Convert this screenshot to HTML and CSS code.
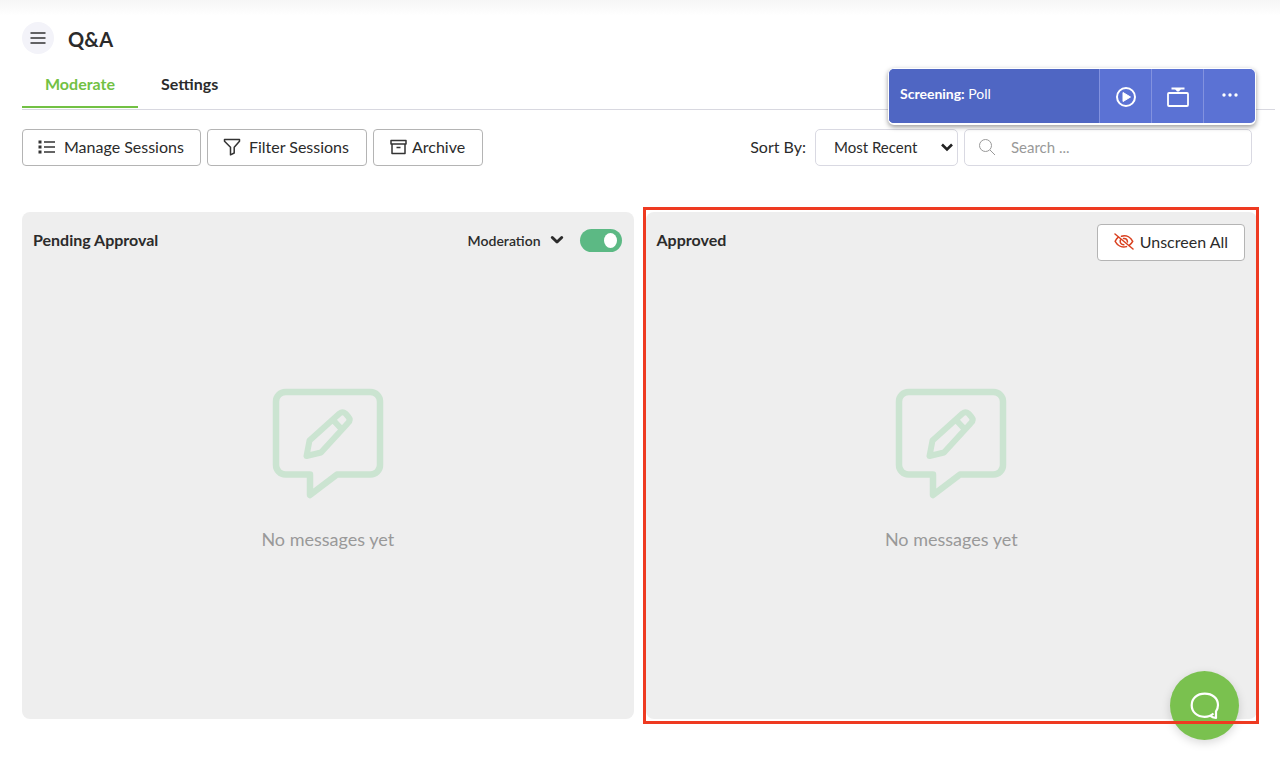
FILE: index.html
```
<!DOCTYPE html>
<html lang="en">
<head>
    <meta charset="UTF-8">
    <meta name="viewport" content="width=device-width, initial-scale=1.0">
    <title>Q&amp;A</title>
    <link rel="stylesheet" href="styles.css">
</head>
<body>
    <header class="header">
        <button class="menu-btn" aria-label="Menu">
            <svg width="16" height="12" viewBox="0 0 16 12" stroke="#333" stroke-width="1.6"><path d="M0.500 1h15M0.500 6h15M0.500 11h15"/></svg>
        </button>
        <h1>Q&amp;A</h1>
    </header>

    <nav class="tabs">
        <a href="#moderate" class="tab active">Moderate</a>
        <a href="#settings" class="tab">Settings</a>
    </nav>

    <div class="screening">
        <div class="screening-label"><strong>Screening:</strong> Poll</div>
        <button aria-label="Play">
            <svg width="22" height="22" viewBox="0 0 22 22" fill="none" stroke="#fff" stroke-width="2"><circle cx="11" cy="11" r="9"/><path d="M8 6.500v9l7.500-4.500z" fill="#fff" stroke-width="1" stroke-linejoin="round"/></svg>
        </button>
        <button aria-label="Screen">
            <svg width="22" height="20" viewBox="0 0 22 20" fill="none" stroke="#fff" stroke-width="1.800"><rect x="1" y="6" width="20" height="13" rx="1"/><path d="M4.500 1.500h13" /><path d="M8 2h6l-2 2.500h-2z" fill="#fff" stroke="none"/></svg>
        </button>
        <button aria-label="More">
            <svg class="dots" width="18" height="4" viewBox="0 0 18 4" fill="#fff"><circle cx="3" cy="2" r="1.700"/><circle cx="9" cy="2" r="1.700"/><circle cx="15" cy="2" r="1.700"/></svg>
        </button>
    </div>

    <div class="toolbar">
        <button class="btn">
            <svg width="18" height="14" viewBox="0 0 18 14" stroke="#333" stroke-width="1.500" fill="#333"><path d="M6 2h11M6 7h11M6 12h11"/><path d="M0.500 0.500h3v3h-3zM0.500 5.500h3v3h-3zM0.500 10.500h3v3h-3z" stroke="none"/></svg>
            <span>Manage Sessions</span>
        </button>
        <button class="btn filter">
            <svg width="18" height="18" viewBox="0 0 18 18" fill="none" stroke="#333" stroke-width="1.500" stroke-linejoin="round"><path d="M1.500 1.500h15v1.700l-5.300 6v5.800l-3.700 1.800v-7.600l-6-6z"/></svg>
            <span>Filter Sessions</span>
        </button>
        <button class="btn archive">
            <svg width="17" height="16" viewBox="0 0 17 16" fill="none" stroke="#333" stroke-width="1.500" stroke-linejoin="round"><rect x="1" y="1.500" width="15" height="3.500"/><path d="M2 5v9.500h13V5M6.500 8.500h4"/></svg>
            <span>Archive</span>
        </button>

        <label class="sort-label" for="sort">Sort By:</label>
        <div class="select">
            <select id="sort">
                <option>Most Recent</option>
            </select>
            <svg width="12" height="9" viewBox="0 0 12 9" fill="none" stroke="#222" stroke-width="2.600"><path d="M1 1.500l5 5 5-5"/></svg>
        </div>
        <div class="search">
            <svg width="18" height="18" viewBox="0 0 18 18" fill="none" stroke="#999" stroke-width="1"><circle cx="7.500" cy="7.500" r="6"/><path d="M12 12l5 5"/></svg>
            <input type="text" placeholder="Search ..." aria-label="Search">
        </div>
    </div>

    <main class="panels">
        <section class="panel">
            <div class="panel-head">
                <h2>Pending Approval</h2>
                <button class="moderation">Moderation
                    <svg width="14" height="10" viewBox="0 0 14 10" fill="none" stroke="#2b2b2b" stroke-width="3" stroke-linejoin="round" stroke-linecap="round"><path d="M2.300 2.500l4.700 4.500 4.700-4.500"/></svg>
                </button>
                <input type="checkbox" class="toggle" aria-label="Moderation" checked>
            </div>
            <div class="empty">
                <svg width="112" height="112" viewBox="0 0 112 112" fill="none" stroke="#cbe4d1" stroke-width="6.500" stroke-linejoin="round"><path d="M38 86.500H13.500a9.500 9.500 0 0 1-9.500-9.500V13.500A9.500 9.500 0 0 1 13.500 4h85a9.500 9.500 0 0 1 9.500 9.500V77a9.500 9.500 0 0 1-9.500 9.500H65L38 107z"/><path d="M34.500 68l3-15.500L67.500 25.500q3-2.500 6 0l3 3.500q2.500 3-0.500 6L49 64.500z M61 32l8.500 9" stroke-width="6"/></svg>
                <p>No messages yet</p>
            </div>
        </section>

        <section class="panel highlighted">
            <div class="panel-head">
                <h2>Approved</h2>
                <button class="btn unscreen">
                    <svg width="20" height="17" viewBox="0 0 20 17" fill="none" stroke="#d9401f" stroke-width="1.500" stroke-linecap="round"><path d="M1 1l18 15M7.500 3.200C13 1.700 17 5 18.700 8.300q-1.200 2.200-3 3.500M4.300 4.200Q2.300 5.800 1.200 8.300C3.500 12.700 8 15 12.500 13.600M9.500 5.500q3.600-.4 4 3.500M6.300 7.200q-.6 4 3.500 4.600"/></svg>
                    <span>Unscreen All</span>
                </button>
            </div>
            <div class="empty">
                <svg width="112" height="112" viewBox="0 0 112 112" fill="none" stroke="#cbe4d1" stroke-width="6.500" stroke-linejoin="round"><path d="M38 86.500H13.500a9.500 9.500 0 0 1-9.500-9.500V13.500A9.500 9.500 0 0 1 13.500 4h85a9.500 9.500 0 0 1 9.500 9.500V77a9.500 9.500 0 0 1-9.500 9.500H65L38 107z"/><path d="M34.500 68l3-15.500L67.500 25.500q3-2.500 6 0l3 3.500q2.500 3-0.500 6L49 64.500z M61 32l8.500 9" stroke-width="6"/></svg>
                <p>No messages yet</p>
            </div>
        </section>
    </main>

    <button class="chat" aria-label="Chat">
        <svg width="30" height="28" viewBox="0 0 30 28" fill="none" stroke="#fff" stroke-width="2.200" stroke-linejoin="round"><path d="M23.500 21.500C21 23.900 18 24.800 14.500 24.800 7 24.800 1.700 20 1.700 13.200S7 1.700 14.800 1.700 28 6.500 28 13q0 3.500-2 6.300V26q-3.500-.3-6-2.300"/></svg>
    </button>
</body>
</html>
```
FILE: styles.css
```
* {
    box-sizing: border-box;
}

body {
    margin: 0;
    min-height: 100vh;
    display: flex;
    flex-direction: column;
    padding: 22px 0 61px 22px;
    font-family: Lato, sans-serif;
    font-size: 16px;
    color: #2b2b2b;
    background: linear-gradient(#f6f6f6, #fff 16px);
}

button, input, select {
    font-family: inherit;
    font-size: 16px;
    color: inherit;
}

button {
    cursor: pointer;
}

svg {
    flex-shrink: 0;
}

.header {
    display: flex;
    align-items: center;
    gap: 14px;
    height: 32px;
}

.menu-btn {
    display: flex;
    align-items: center;
    justify-content: center;
    width: 32px;
    height: 32px;
    padding: 0;
    border: none;
    border-radius: 50%;
    background: #f3f3f9;
}

h1 {
    margin: 0;
    padding-top: 2px;
    font-size: 20px;
    line-height: 28px;
    font-weight: bold;
}

.tabs {
    display: flex;
    height: 56px;
    margin-right: 5px;
    padding-top: 14px;
    padding-bottom: 1px;
    border-bottom: 1px solid #d8d8e0;
}

.tab {
    padding: 5px 23px 0;
    font-size: 16px;
    line-height: 22px;
    font-weight: bold;
    color: inherit;
    text-decoration: none;
}

.tab.active {
    color: #72c144;
    border-bottom: 2px solid #72c144;
}

/* floating screening bar */
.screening {
    position: absolute;
    top: 68px;
    right: 24px;
    z-index: 2;
    display: flex;
    width: 368px;
    height: 57px;
    border: 1px solid #fff;
    border-bottom-width: 2px;
    border-radius: 6px;
    overflow: hidden;
    background: #5b72d4;
    box-shadow: 0 2px 5px rgba(0, 0, 0, 0.4);
    color: #fff;
}

.screening-label {
    flex: 1;
    padding: 15px 11px;
    font-size: 14px;
    line-height: 20px;
    background: #4f66c3;
}

.screening button {
    display: flex;
    align-items: center;
    justify-content: center;
    width: 52px;
    padding: 2px 0 0;
    border: none;
    border-left: 1px solid #8292df;
    background: none;
}

.screening .dots {
    margin-bottom: 4px;
}

.toolbar {
    display: flex;
    align-items: center;
    gap: 6px;
    margin: 19px 28px 0 0;
}

.btn {
    display: flex;
    align-items: center;
    gap: 8px;
    height: 37px;
    padding: 0 16px 2px 15px;
    border: 1px solid #b4b4b4;
    border-radius: 4px;
    background: #fff;
    white-space: nowrap;
}

.btn.filter {
    padding-right: 17px;
}

.btn.archive {
    gap: 5px;
    padding-left: 16px;
    padding-right: 17px;
}

.sort-label {
    margin-left: auto;
    padding: 0 3px 2px 0;
}

.select {
    position: relative;
    width: 143px;
}

.select select {
    appearance: none;
    width: 100%;
    height: 37px;
    padding: 0 18px 1px;
    border: 1px solid #d9d9e2;
    border-radius: 5px;
    background: #fff;
    font-size: 15px;
}

.select svg {
    position: absolute;
    right: 5px;
    top: 14px;
    pointer-events: none;
}

.search {
    display: flex;
    align-items: center;
    gap: 15px;
    width: 288px;
    height: 37px;
    padding: 0 13px 2px;
    border: 1px solid #d9d9e2;
    border-radius: 5px;
    background: #fff;
}

.search input {
    flex: 1;
    min-width: 0;
    padding: 0;
    border: none;
    outline: none;
    background: none;
    font-size: 15px;
}

.search input::placeholder {
    color: #999;
}

.panels {
    flex: 1;
    display: grid;
    grid-template-columns: 1fr 1fr;
    gap: 12px;
    margin: 46px 23px 0 0;
}

.panel {
    position: relative;
    display: flex;
    flex-direction: column;
    border-radius: 8px;
    background: #eee;
}

/* frame stays above the chat button */
.highlighted::after {
    content: "";
    position: absolute;
    inset: -5px -2px -5px -3px;
    z-index: 3;
    border: 3px solid #ee3a21;
    pointer-events: none;
}

.panel-head {
    display: flex;
    align-items: center;
    height: 57px;
    padding: 0 12px 0 11px;
}

.panel-head h2 {
    margin: 0 auto 0 0;
    padding-bottom: 2px;
    font-size: 16px;
    font-weight: bold;
}

.moderation {
    display: flex;
    align-items: center;
    gap: 9px;
    margin-right: 16px;
    padding: 0 0 1px;
    border: none;
    background: none;
    font-size: 14px;
    font-weight: 600;
}

.toggle {
    appearance: none;
    display: flex;
    align-items: center;
    width: 42px;
    height: 23px;
    margin: 0;
    padding: 0 5px;
    border-radius: 12px;
    background: #bbb;
    cursor: pointer;
}

.toggle::before {
    content: "";
    width: 13px;
    height: 15px;
    border-radius: 50%;
    background: #fff;
}

.toggle:checked {
    justify-content: flex-end;
    background: #5cb984;
}

.unscreen {
    gap: 6px;
    margin-top: 3px;
    padding-left: 16px;
}

.empty {
    display: flex;
    flex-direction: column;
    align-items: center;
    padding-top: 119px;
}

.empty p {
    margin: 26px 0 0;
    font-size: 18px;
    line-height: 26px;
    color: #999;
}

.chat {
    position: fixed;
    right: 41px;
    bottom: 40px;
    z-index: 2;
    display: flex;
    align-items: center;
    justify-content: center;
    width: 69px;
    height: 69px;
    padding: 0;
    border: none;
    border-radius: 50%;
    background: #7ac14f;
    box-shadow: 0 3px 10px rgba(0, 0, 0, 0.15);
}
```
